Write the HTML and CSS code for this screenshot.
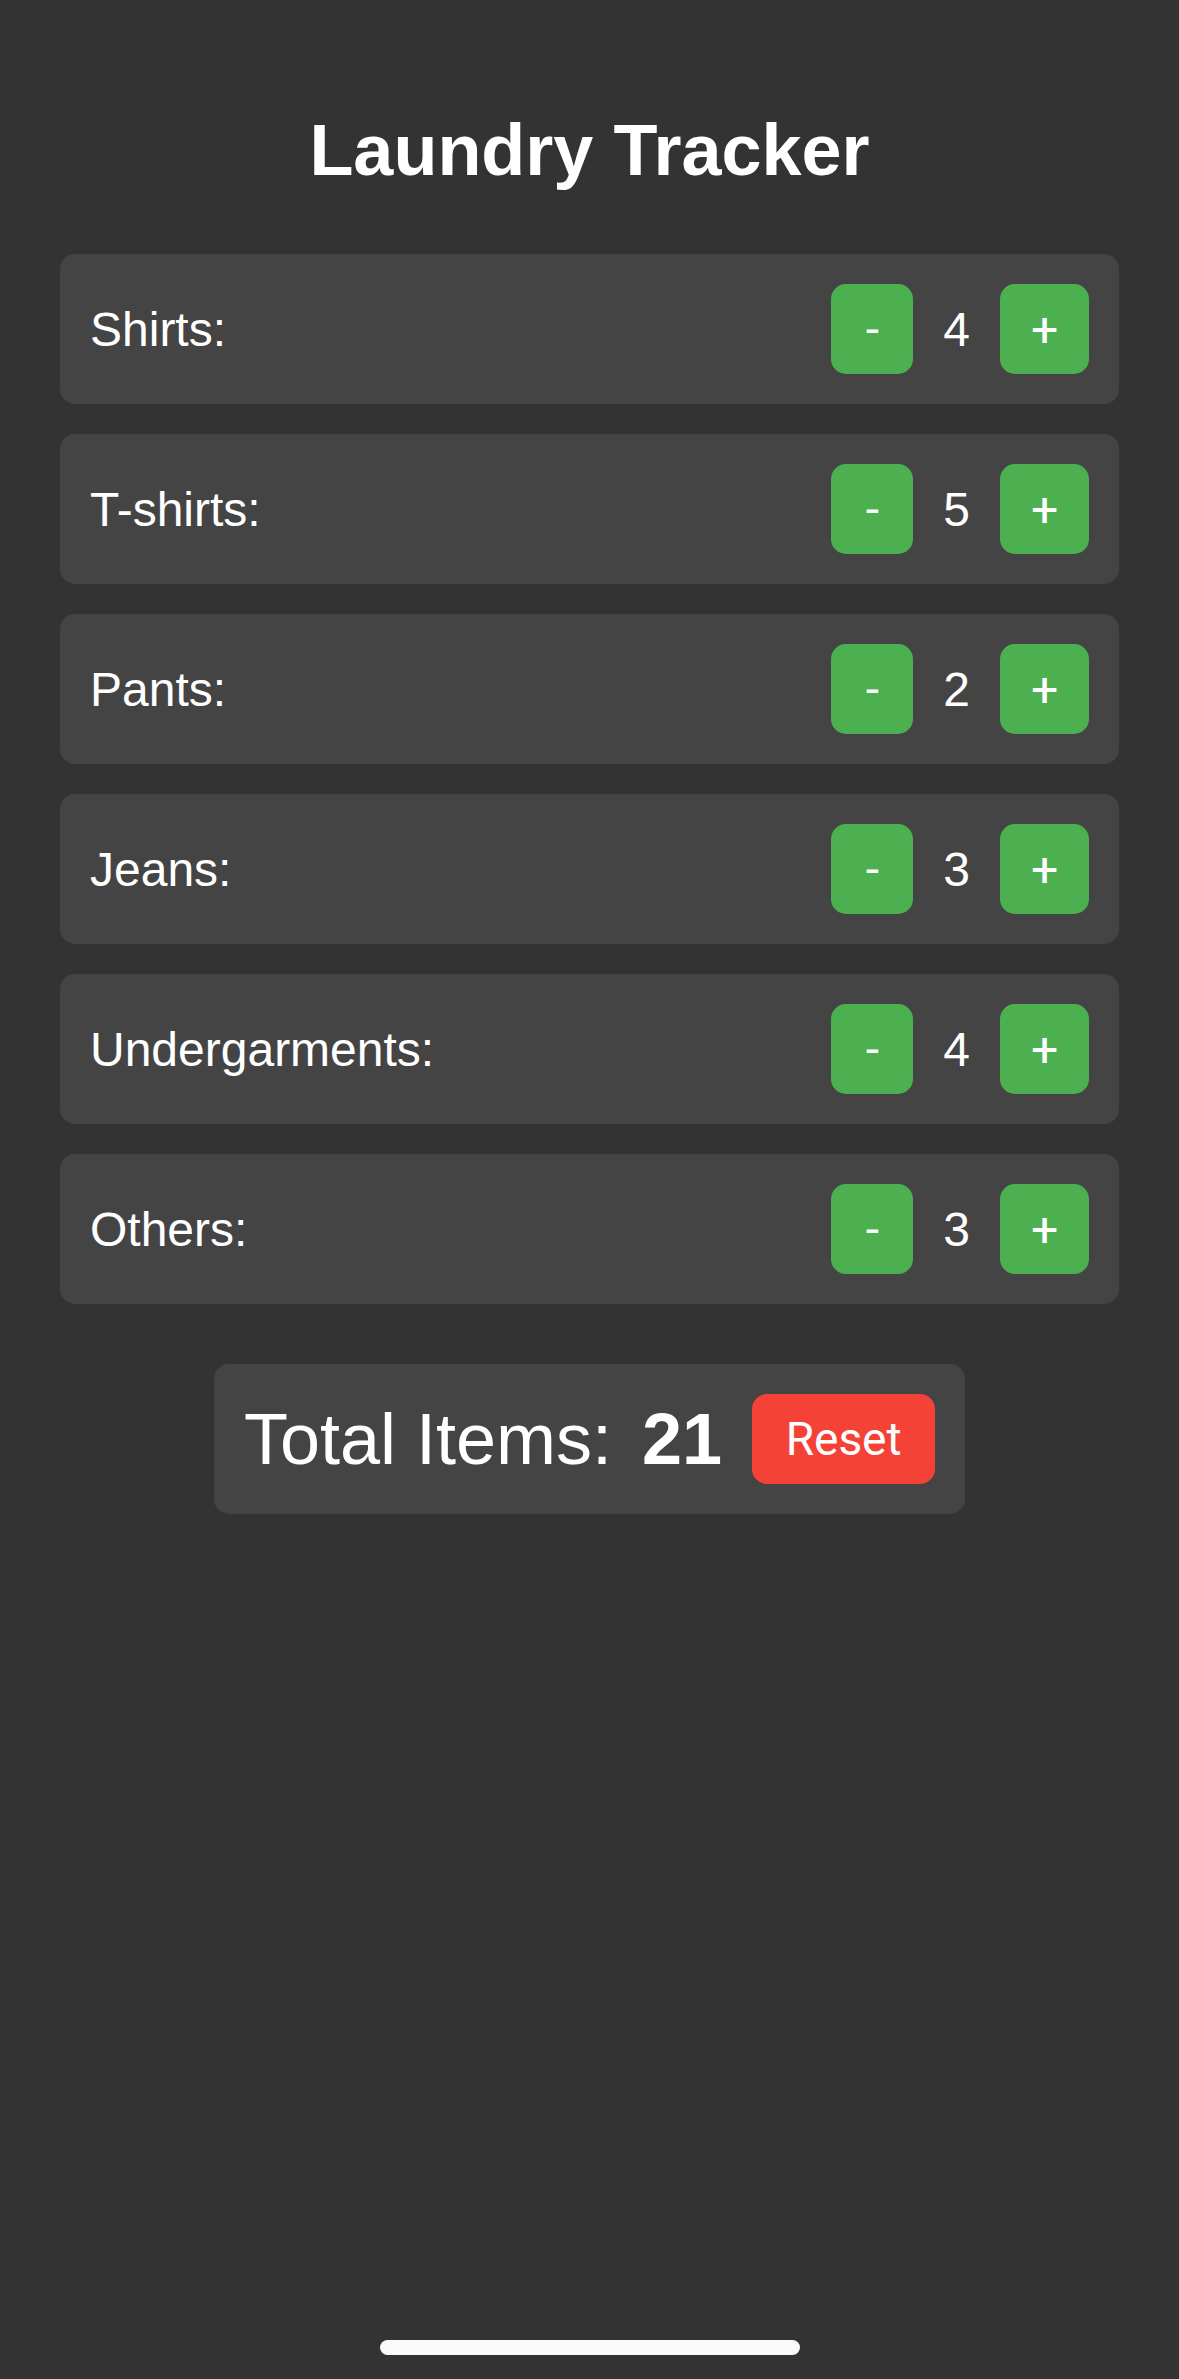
FILE: index.html
```html
<!DOCTYPE html>
<html lang="en">
<head>
<meta charset="utf-8">
<title>Laundry Tracker</title>
<link rel="stylesheet" href="styles.css">
</head>
<body>
<main class="app">
  <h1 class="title">Laundry Tracker</h1>
  <div class="list">
    <div class="item">
      <span class="item-label">Shirts:</span>
      <div class="counter">
        <button class="btn btn-minus">-</button>
        <span class="count">4</span>
        <button class="btn btn-plus">+</button>
      </div>
    </div>
    <div class="item">
      <span class="item-label">T-shirts:</span>
      <div class="counter">
        <button class="btn btn-minus">-</button>
        <span class="count">5</span>
        <button class="btn btn-plus">+</button>
      </div>
    </div>
    <div class="item">
      <span class="item-label">Pants:</span>
      <div class="counter">
        <button class="btn btn-minus">-</button>
        <span class="count">2</span>
        <button class="btn btn-plus">+</button>
      </div>
    </div>
    <div class="item">
      <span class="item-label">Jeans:</span>
      <div class="counter">
        <button class="btn btn-minus">-</button>
        <span class="count">3</span>
        <button class="btn btn-plus">+</button>
      </div>
    </div>
    <div class="item">
      <span class="item-label">Undergarments:</span>
      <div class="counter">
        <button class="btn btn-minus">-</button>
        <span class="count">4</span>
        <button class="btn btn-plus">+</button>
      </div>
    </div>
    <div class="item">
      <span class="item-label">Others:</span>
      <div class="counter">
        <button class="btn btn-minus">-</button>
        <span class="count">3</span>
        <button class="btn btn-plus">+</button>
      </div>
    </div>
  </div>
  <div class="total-wrap">
    <div class="total">
      <span class="total-text">Total Items:</span>
      <strong class="total-count">21</strong>
      <button class="reset">Reset</button>
    </div>
  </div>
</main>
<div class="home-indicator"></div>
</body>
</html>
```

FILE: styles.css
```css
html, body {
  margin: 0;
  padding: 0;
}
body {
  background: #333333;
  color: #ffffff;
  font-family: "Liberation Sans", Arial, Helvetica, sans-serif;
  min-height: 2379px;
  position: relative;
}
.app {
  padding: 109px 60px 0;
}
.title {
  margin: 0 0 63px;
  font-size: 72px;
  font-weight: bold;
  text-align: center;
  line-height: normal;
}
.list {
  display: flex;
  flex-direction: column;
  gap: 30px;
}
.item {
  display: flex;
  align-items: center;
  justify-content: space-between;
  background: #444444;
  border-radius: 15px;
  padding: 30px;
  height: 90px;
}
.item-label {
  font-size: 48px;
}
.counter {
  display: flex;
  align-items: center;
}
.count {
  font-size: 48px;
  margin: 0 30px;
}
.btn {
  height: 90px;
  border: none;
  border-radius: 15px;
  background: #4CAF50;
  color: #ffffff;
  font-family: Roboto, "Liberation Sans", sans-serif;
  font-size: 48px;
  padding: 0;
  display: flex;
  align-items: center;
  justify-content: center;
}
.btn-minus {
  width: 82px;
}
.btn-plus {
  width: 89px;
}
.total-wrap {
  display: flex;
  justify-content: center;
  margin-top: 60px;
}
.total {
  display: flex;
  align-items: center;
  background: #444444;
  border-radius: 15px;
  padding: 30px;
  height: 90px;
}
.total-text {
  font-size: 72px;
}
.total-count {
  font-size: 72px;
  font-weight: bold;
  margin-left: 30px;
}
.reset {
  margin-left: 30px;
  width: 183px;
  height: 90px;
  border: none;
  border-radius: 15px;
  background: #F44336;
  color: #ffffff;
  font-family: Roboto, "Liberation Sans", sans-serif;
  font-size: 46px;
  padding: 0;
}
.home-indicator {
  position: absolute;
  left: 380px;
  top: 2340px;
  width: 420px;
  height: 15px;
  border-radius: 8px;
  background: #fafafa;
}
```
